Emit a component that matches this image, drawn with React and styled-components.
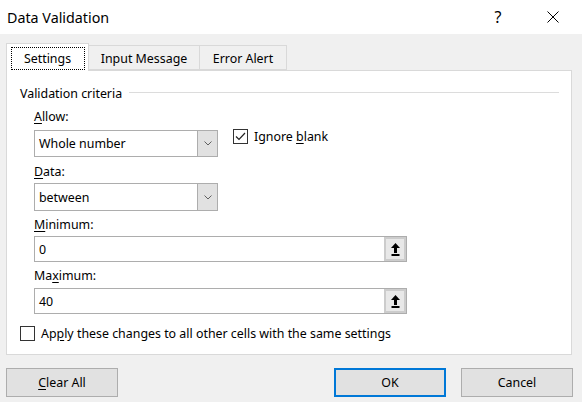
import React from "react";
import styled, { createGlobalStyle } from "styled-components";

const Global = createGlobalStyle`
  html, body { margin: 0; padding: 0; background: #f0f0f0; }
  * { box-sizing: border-box; }
`;

const FONT = `"Noto Sans", "Open Sans", Arial, sans-serif`;

const Dialog = styled.div`
  width: 582px;
  height: 402px;
  background: #f0f0f0;
  font-family: ${FONT};
  font-size: 12.4px;
  color: #000;
  display: flex;
  flex-direction: column;
  overflow: hidden;
`;

const TitleBar = styled.div`
  height: 34px;
  background: #fff;
  display: flex;
  align-items: center;
  padding-left: 7px;
`;

const Title = styled.div`
  flex: 1;
  font-size: 14.3px;
  color: #000;
`;

const TitleButton = styled.div`
  width: 46px;
  height: 34px;
  display: flex;
  align-items: center;
  justify-content: center;
  font-size: 16px;
  color: #000;
  margin-right: ${(p) => p.$mr || 0}px;
`;

const Body = styled.div`
  padding: 9px 10px 0 6px;
  display: flex;
  flex-direction: column;
`;

const TabRow = styled.div`
  display: flex;
  align-items: flex-end;
  height: 28px;
  position: relative;
  z-index: 1;
  margin-bottom: -1px;
`;

const Tab = styled.div`
  height: ${(p) => (p.$active ? 28 : 25)}px;
  margin-bottom: ${(p) => (p.$active ? 0 : 1)}px;
  width: ${(p) => p.$w}px;
  background: ${(p) => (p.$active ? "#fff" : "#f0f0f0")};
  border: 1px solid #d9d9d9;
  border-bottom: ${(p) => (p.$active ? "none" : "1px solid #d9d9d9")};
  border-left: ${(p) => (p.$noLeft ? "none" : "1px solid #d9d9d9")};
  display: flex;
  align-items: center;
  justify-content: center;
  padding-top: ${(p) => (p.$active ? 0 : 1)}px;
`;

const FocusBox = styled.div`
  border: 1px dotted #000;
  width: 74px;
  height: 23px;
  display: flex;
  align-items: center;
  justify-content: center;
  margin-top: 1px;
`;

const Panel = styled.div`
  height: 285px;
  background: #fff;
  border: 1px solid #d9d9d9;
  padding: 13px 0 0 13px;
  display: flex;
  flex-direction: column;
`;

const GroupHeader = styled.div`
  display: flex;
  align-items: center;
  height: 18px;
  padding-right: 12px;
`;

const GroupLine = styled.div`
  flex: 1;
  height: 1px;
  background: #dcdcdc;
  margin-left: 7px;
  margin-top: -2px;
`;

const Indent = styled.div`
  padding-left: 14px;
  display: flex;
  flex-direction: column;
`;

const Label = styled.div`
  height: 16px;
  line-height: 16px;
  margin-top: ${(p) => p.$mt}px;
  margin-bottom: ${(p) => p.$mb}px;
`;

const U = styled.span`
  text-decoration: underline;
  text-underline-offset: 2px;
`;

const ComboRow = styled.div`
  display: flex;
  align-items: flex-start;
`;

const Combo = styled.div`
  width: 184px;
  height: ${(p) => p.$h}px;
  border: 1px solid #adadad;
  background: #fff;
  display: flex;
`;

const ComboText = styled.div`
  flex: 1;
  display: flex;
  align-items: center;
  padding-left: 4px;
`;

const ComboButton = styled.div`
  width: 20px;
  background: #e1e1e1;
  border-left: 1px solid #adadad;
  display: flex;
  align-items: center;
  justify-content: center;
`;

const CheckLabel = styled.div`
  display: flex;
  align-items: center;
  gap: 6px;
  margin-left: ${(p) => p.$ml || 0}px;
  margin-top: ${(p) => p.$mt || 0}px;
`;

const Box = styled.div`
  width: 15px;
  height: 15px;
  border: 1px solid #333;
  background: #fff;
  display: flex;
  align-items: center;
  justify-content: center;
`;

const RefInput = styled.div`
  width: 373px;
  height: ${(p) => p.$h}px;
  border: 1px solid #adadad;
  background: #fff;
  display: flex;
`;

const RefButton = styled.div`
  width: 22px;
  margin: 0 0 0 auto;
  border: 2px solid #cccccc;
  background: #e8e8e8;
  display: flex;
  align-items: center;
  justify-content: center;
`;

const Footer = styled.div`
  display: flex;
  padding: 13px 9px 0 6px;
`;

const Button = styled.div`
  width: 112px;
  height: 29px;
  background: #e1e1e1;
  border: ${(p) => (p.$default ? "2px solid #0078d7" : "1px solid #adadad")};
  display: flex;
  align-items: center;
  justify-content: center;
  margin-left: ${(p) => p.$ml || 0}px;
`;

const Chevron = () => (
  <svg width="8" height="5" viewBox="0 0 8 5">
    <polyline points="0.5,0.5 4,4 7.5,0.5" fill="none" stroke="#606060" strokeWidth="1" />
  </svg>
);

const UploadIcon = () => (
  <svg width="9" height="13" viewBox="0 0 9 13">
    <polygon points="4.5,0 0,5 9,5" fill="#000" />
    <rect x="3" y="5" width="3" height="5" fill="#000" />
    <rect x="0.5" y="11" width="8" height="2" fill="#000" />
  </svg>
);

const Check = () => (
  <svg width="11" height="9" viewBox="0 0 11 9">
    <polyline points="1,4.5 4,7.5 10,1" fill="none" stroke="#222" strokeWidth="1.2" />
  </svg>
);

const CloseIcon = () => (
  <svg width="12" height="12" viewBox="0 0 12 12">
    <path d="M0.5 0.5 L11.5 11.5 M11.5 0.5 L0.5 11.5" stroke="#000" strokeWidth="1" />
  </svg>
);

export default function App() {
  return (
    <>
      <Global />
      <Dialog>
        <TitleBar>
          <Title>Data Validation</Title>
          <TitleButton $mr={9}>?</TitleButton>
          <TitleButton>
            <CloseIcon />
          </TitleButton>
          <div style={{ width: 6 }} />
        </TitleBar>
        <Body>
          <TabRow>
            <Tab $active $w={83}>
              <FocusBox>Settings</FocusBox>
            </Tab>
            <Tab $w={111} $noLeft>Input Message</Tab>
            <Tab $w={87} $noLeft>Error Alert</Tab>
          </TabRow>
          <Panel>
            <GroupHeader>
              Validation criteria
              <GroupLine />
            </GroupHeader>
            <Indent>
              <Label $mt={7} $mb={5}>
                <U>A</U>llow:
              </Label>
              <ComboRow>
                <Combo $h={27}>
                  <ComboText>Whole number</ComboText>
                  <ComboButton>
                    <Chevron />
                  </ComboButton>
                </Combo>
                <CheckLabel $ml={15} $mt={-2}>
                  <Box>
                    <Check />
                  </Box>
                  <span>
                    Ignore <U>b</U>lank
                  </span>
                </CheckLabel>
              </ComboRow>
              <Label $mt={7} $mb={3}>
                <U>D</U>ata:
              </Label>
              <Combo $h={28}>
                <ComboText>between</ComboText>
                <ComboButton>
                  <Chevron />
                </ComboButton>
              </Combo>
              <Label $mt={6} $mb={3}>
                <U>M</U>inimum:
              </Label>
              <RefInput $h={26}>
                <ComboText>0</ComboText>
                <RefButton>
                  <UploadIcon />
                </RefButton>
              </RefInput>
              <Label $mt={6} $mb={4}>
                Ma<U>x</U>imum:
              </Label>
              <RefInput $h={26}>
                <ComboText>40</ComboText>
                <RefButton>
                  <UploadIcon />
                </RefButton>
              </RefInput>
            </Indent>
            <CheckLabel $mt={11}>
              <Box />
              <span>
                Ap<U>p</U>ly these changes to all other cells with the same settings
              </span>
            </CheckLabel>
          </Panel>
        </Body>
        <Footer>
          <Button>
            <span>
              <U>C</U>lear All
            </span>
          </Button>
          <Button $default $ml={216}>OK</Button>
          <Button $ml={15}>Cancel</Button>
        </Footer>
      </Dialog>
    </>
  );
}
